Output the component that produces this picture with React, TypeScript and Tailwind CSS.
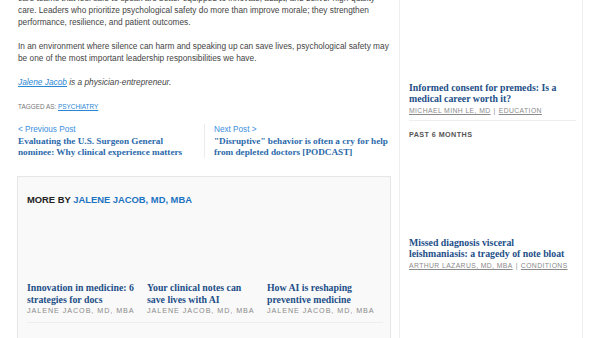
import React from 'react';

const sans = "font-['Liberation_Sans',Arial,sans-serif]";
const serif = "font-['Liberation_Serif','Times_New_Roman',serif]";

interface Story {
  title: string;
  author: string;
}

const moreBy: Story[] = [
  { title: 'Innovation in medicine: 6 strategies for docs', author: 'JALENE JACOB, MD, MBA' },
  { title: 'Your clinical notes can save lives with AI', author: 'JALENE JACOB, MD, MBA' },
  { title: 'How AI is reshaping preventive medicine', author: 'JALENE JACOB, MD, MBA' },
];

const SideStory: React.FC<{ title: string; author: string; tag: string; imgH: string }> = ({ title, author, tag, imgH }) => {
  return (
    <div className="flex flex-col pr-[7px]">
      <div className={imgH}></div>
      <h4 className={`${serif} text-[9.8px] font-bold leading-[10.5px] text-[#1d4f88]`}>{title}</h4>
      <div className={`${sans} mt-[1.5px] text-[6.8px] tracking-[0.06em] leading-[9px] text-[#8a8a8a]`}>
        <span className="underline">{author}</span>
        <span className="mx-[3px]">|</span>
        <span className="underline">{tag}</span>
      </div>
    </div>
  );
};

export default function App() {
  return (
    <div className="w-[600px] h-[338px] overflow-hidden bg-white flex">
      {/* Article column */}
      <div className={`${sans} ml-[17px] w-[374px] mt-[-7px] flex flex-col`}>
        <div className="pl-[1px] text-[8.3px] leading-[11.8px] text-[#444]">
          <p>
            care teams that feel safe to speak are better equipped to innovate, adapt, and deliver high-quality care. Leaders who prioritize psychological safety do more than improve morale; they strengthen performance, resilience, and patient outcomes.
          </p>
          <p className="mt-[13px]">
            In an environment where silence can harm and speaking up can save lives, psychological safety may be one of the most important leadership responsibilities we have.
          </p>
          <p className="mt-[12px] italic">
            <a className="text-[#2a86d4] underline">Jalene Jacob</a> is a physician-entrepreneur.
          </p>
          <div className="mt-[13px] text-[6.4px] leading-[10px] text-[#777]">
            TAGGED AS: <a className="text-[#2a86d4] underline">PSYCHIATRY</a>
          </div>
        </div>

        {/* Prev / next */}
        <div className="mt-[12px] flex pl-[1px]">
          <div className="w-[186px] pr-[8px]">
            <div className="text-[8.2px] leading-[11px] text-[#3a8ede]">&lt; Previous Post</div>
            <div className={`${serif} mt-[1px] text-[9.2px] font-bold leading-[11px] text-[#2b69aa]`}>
              Evaluating the U.S. Surgeon General nominee: Why clinical experience matters
            </div>
          </div>
          <div className="border-l border-[#ececec] pl-[9px] flex-1">
            <div className="text-[8.2px] leading-[11px] text-[#3a8ede]">Next Post &gt;</div>
            <div className={`${serif} mt-[1px] text-[9.2px] font-bold leading-[11px] text-[#2b69aa]`}>
              "Disruptive" behavior is often a cry for help from depleted doctors [PODCAST]
            </div>
          </div>
        </div>

        {/* More by box */}
        <div className="mt-[18.5px] border border-[#e6e6e6] bg-[#f9f9f9] px-[9px] pt-[16.5px] pb-[40px]">
          <div className="text-[9.4px] font-bold leading-[12px] text-[#222]">
            MORE BY <span className="text-[#1c74c2]">JALENE JACOB, MD, MBA</span>
          </div>
          <div className="mt-[76.5px] w-[356px] grid grid-cols-[120px_120px_116px] border-b border-[#eeeeee] pb-[6px]">
            {moreBy.map((s, i) => (
              <div key={i}>
                <h4 className={`${serif} pr-[10px] text-[9.8px] font-bold leading-[11.6px] text-[#1d4f88]`}>{s.title}</h4>
                <div className="mt-[0.5px] whitespace-nowrap text-[7.2px] tracking-[0.13em] leading-[10px] text-[#8a8a8a]">{s.author}</div>
              </div>
            ))}
          </div>
        </div>
      </div>

      {/* Sidebar */}
      <div className="ml-[8px] w-[184px] h-full border-x border-[#efefef] pl-[9px] pr-[6px] flex flex-col">
        <SideStory
          title="Informed consent for premeds: Is a medical career worth it?"
          author="MICHAEL MINH LE, MD"
          tag="EDUCATION"
          imgH="h-[83px]"
        />
        <div className="mt-[5.5px] border-b border-[#eeeeee]"></div>
        <div className={`${sans} mt-[9px] text-[7.2px] font-bold tracking-[0.06em] leading-[9px] text-[#555]`}>PAST 6 MONTHS</div>
        <SideStory
          title="Missed diagnosis visceral leishmaniasis: a tragedy of note bloat"
          author="ARTHUR LAZARUS, MD, MBA"
          tag="CONDITIONS"
          imgH="h-[99px]"
        />
      </div>
    </div>
  );
}
